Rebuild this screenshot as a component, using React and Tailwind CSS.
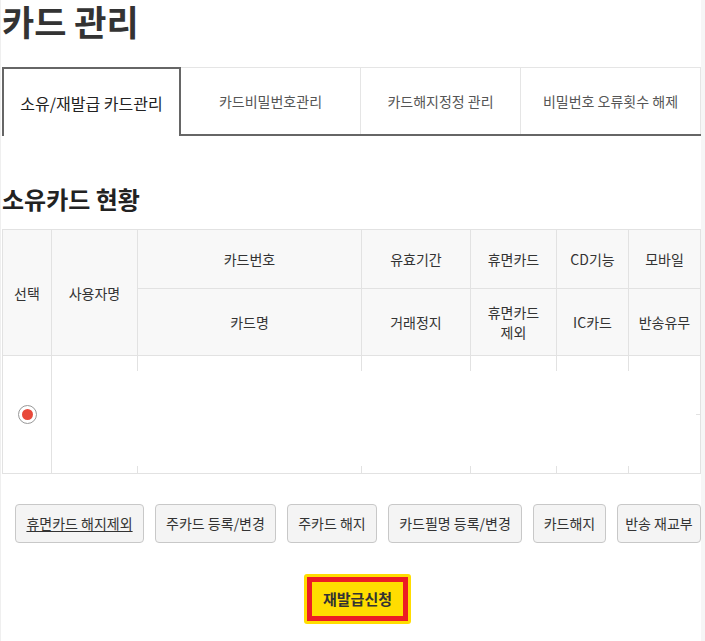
import React from 'react';

const font = { fontFamily: '"Noto Sans CJK KR", "Noto Sans", sans-serif' };

const tabs = ['카드비밀번호관리', '카드해지정정 관리', '비밀번호 오류횟수 해제'];

const actions = [
  { label: '휴면카드 해지제외', w: 'w-[129px]' },
  { label: '주카드 등록/변경', w: 'w-[121px]' },
  { label: '주카드 해지', w: 'w-[90px]' },
  { label: '카드필명 등록/변경', w: 'w-[134px]' },
  { label: '카드해지', w: 'w-[73px]' },
  { label: '반송 재교부', w: 'w-[84px]' },
];

function HeadCell({ children, className = '' }) {
  return (
    <div className={`flex items-center justify-center text-center bg-[#f8f8f8] border-r border-b border-[#e2e2e2] text-[14px] leading-[20px] text-[#333] px-1 ${className}`}>
      {children}
    </div>
  );
}

function BodyCell({ last }) {
  if (last) return <div className="border-r border-b border-[#e2e2e2] flex flex-col justify-center items-end"><div className="w-[4px] h-px bg-[#e2e2e2]" /></div>;
  return (
    <div className="border-b border-[#e2e2e2] flex flex-col justify-between">
      <div className="h-[15px] self-end border-r border-[#e2e2e2]" />
      <div className="h-[7px] self-end border-r border-[#e2e2e2]" />
    </div>
  );
}

export default function App() {
  return (
    <div className="min-h-screen bg-[#f6f6f6]" style={font}>
      <div className="w-[701px] min-h-screen bg-white border-l border-[#efefef] pl-[1px] pb-[17px]">
        {/* Title */}
        <h1 className="text-[35px] leading-[42px] font-bold text-[#333]">카드 관리</h1>

        {/* Tabs */}
        <div className="flex mt-[25px] h-[69px]">
          <div className="w-[179px] border-2 border-b-0 border-[#666] flex items-center justify-center text-[16px] text-[#222] whitespace-nowrap">
            소유/재발급 카드관리
          </div>
          <div className="flex-1 flex border-b-2 border-[#666]">
            {tabs.map((t, i) => (
              <div
                key={t}
                className={`${i === 1 ? 'w-[160px]' : 'w-[180px]'} border-t border-r border-[#e5e5e5] flex items-center justify-center text-[14px] text-[#555] pt-[1px] whitespace-nowrap`}
              >
                {t}
              </div>
            ))}
          </div>
        </div>

        {/* Section heading */}
        <h2 className="mt-[48px] mb-[15px] text-[24px] leading-[30px] font-bold text-[#222]">소유카드 현황</h2>

        {/* Table */}
        <div className="grid grid-cols-[49px_86px_224px_109px_86px_72px_72px] grid-rows-[59px_67px_118px] border-l border-t border-[#e2e2e2]">
          <HeadCell className="row-span-2">선택</HeadCell>
          <HeadCell className="row-span-2">사용자명</HeadCell>
          <HeadCell>카드번호</HeadCell>
          <HeadCell>유효기간</HeadCell>
          <HeadCell>휴면카드</HeadCell>
          <HeadCell>CD기능</HeadCell>
          <HeadCell>모바일</HeadCell>
          <HeadCell>카드명</HeadCell>
          <HeadCell>거래정지</HeadCell>
          <HeadCell className="px-[12px]">휴면카드 제외</HeadCell>
          <HeadCell>IC카드</HeadCell>
          <HeadCell>반송유무</HeadCell>

          <div className="border-r border-b border-[#e2e2e2] flex items-center justify-center">
            <span className="w-[19px] h-[19px] rounded-full border border-[#999] flex items-center justify-center bg-white">
              <span className="w-[11px] h-[11px] rounded-full bg-[#e8493a]" />
            </span>
          </div>
          <BodyCell />
          <BodyCell />
          <BodyCell />
          <BodyCell />
          <BodyCell />
          <BodyCell last />
        </div>

        {/* Action buttons */}
        <div className="flex gap-[11px] pl-[13px] mt-[30px]">
          {actions.map((a, i) => (
            <button
              key={a.label}
              className={`${a.w} h-[39px] rounded-[4px] border border-[#c8c8c8] bg-[#f4f4f4] text-[14px] text-[#333] whitespace-nowrap ${i === 0 ? 'underline underline-offset-2' : ''}`}
            >
              {a.label}
            </button>
          ))}
        </div>

        {/* Reissue request */}
        <div className="flex pl-[302px] mt-[31px]">
          <button className="p-[3px] bg-[#ffdd00] rounded-[3px]">
            <span className="block border-[5px] border-[#ec1c24] bg-[#ffdd00] px-[11px] h-[44px] leading-[34px] text-[15px] font-semibold text-[#333]">
              재발급신청
            </span>
          </button>
        </div>
      </div>
    </div>
  );
}
